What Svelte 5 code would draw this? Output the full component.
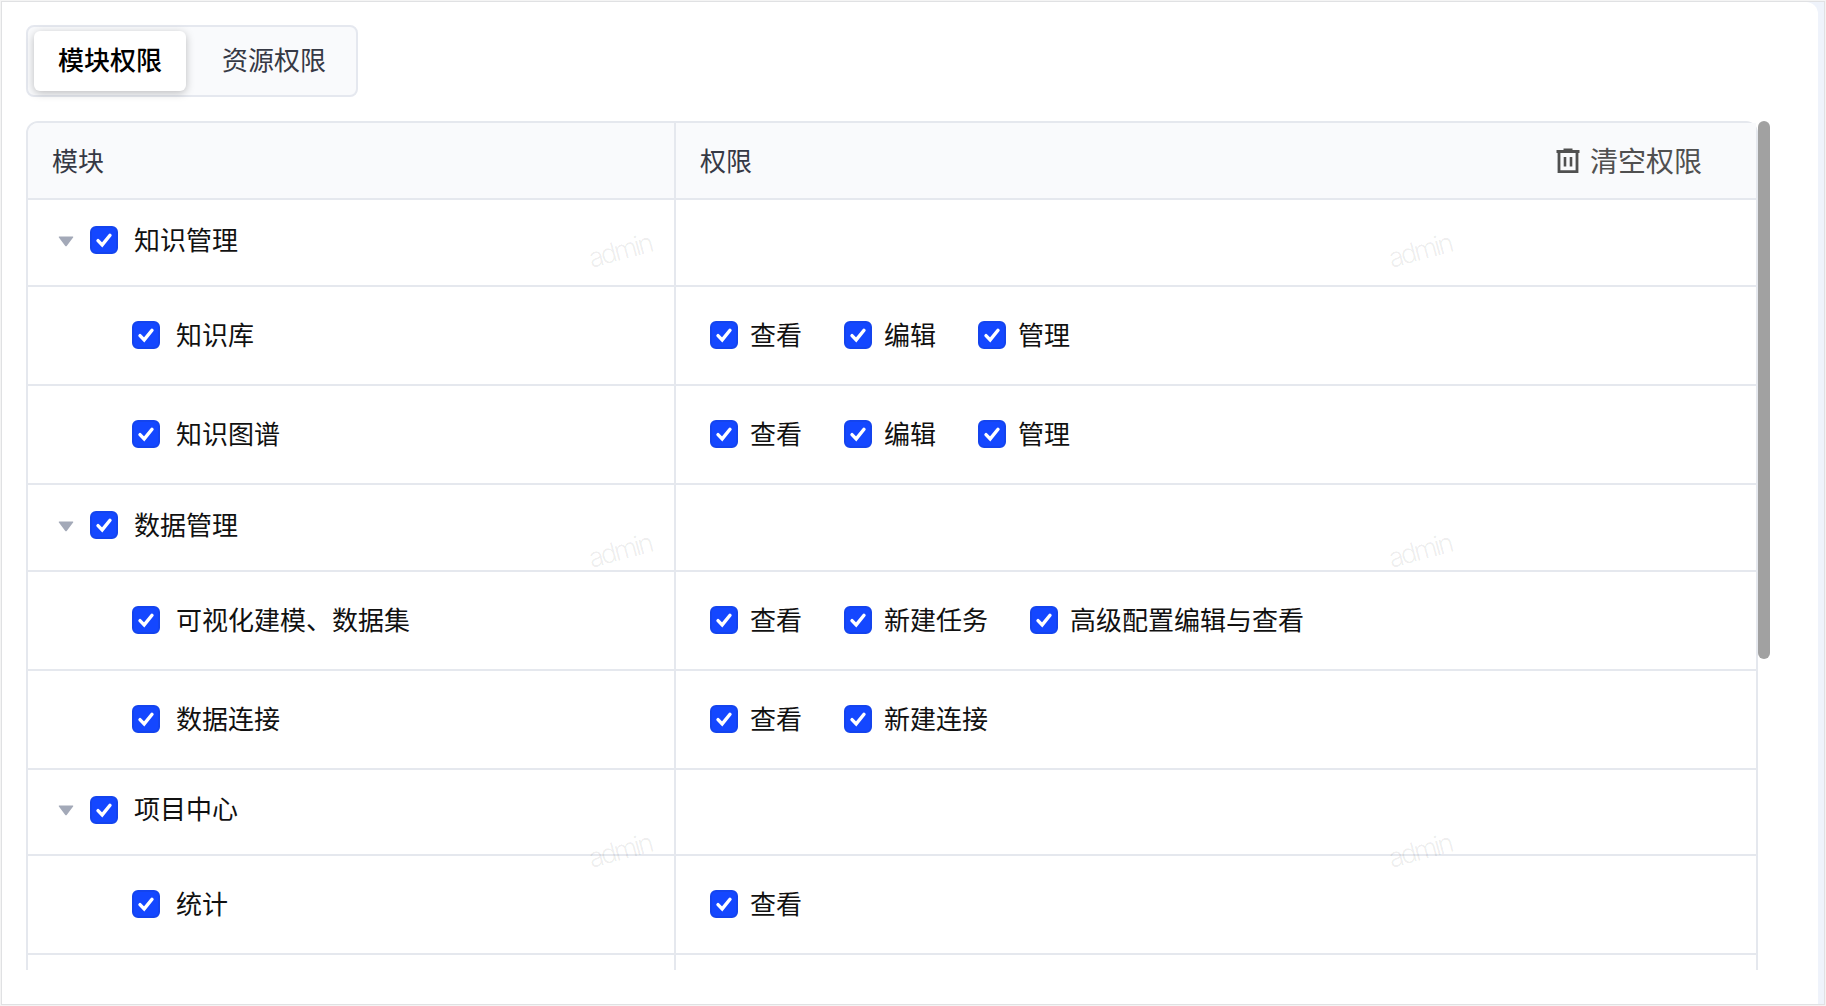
<script lang="ts">
  interface Row {
    label: string;
    kind: 'group' | 'leaf';
    height: number;
    perms?: string[];
  }

  const TABS = [
    { id: 'module', label: '模块权限' },
    { id: 'resource', label: '资源权限' },
  ];

  const ROWS: Row[] = [
    { label: '知识管理', kind: 'group', height: 87 },
    { label: '知识库', kind: 'leaf', height: 99, perms: ['查看', '编辑', '管理'] },
    { label: '知识图谱', kind: 'leaf', height: 99, perms: ['查看', '编辑', '管理'] },
    { label: '数据管理', kind: 'group', height: 87 },
    { label: '可视化建模、数据集', kind: 'leaf', height: 99, perms: ['查看', '新建任务', '高级配置编辑与查看'] },
    { label: '数据连接', kind: 'leaf', height: 99, perms: ['查看', '新建连接'] },
    { label: '项目中心', kind: 'group', height: 86 },
    { label: '统计', kind: 'leaf', height: 99, perms: ['查看'] },
  ];

  const MARKS = [0, 1, 2, 3, 4, 5];

  let active = $state('module');
</script>

{#snippet checkbox()}
  <svg class="checkbox" viewBox="0 0 28 28">
    <rect x="1" y="1" width="26" height="26" rx="5" fill="#1447ff" stroke="#1444ee" stroke-width="2" />
    <path d="M8 14.6 L12.2 18.9 L20 9.2" fill="none" stroke="#fff" stroke-width="3.4" stroke-linecap="round" stroke-linejoin="miter" />
  </svg>
{/snippet}

<div class="page">
  <div class="panel">
    <div class="tabs">
      {#each TABS as tab}
        <button class="tab" class:active={active === tab.id} onclick={() => (active = tab.id)}>
          {tab.label}
        </button>
      {/each}
    </div>

    <div class="scroller">
      <div class="table">
        <div class="row head">
          <div class="cell module">模块</div>
          <div class="cell perms">
            <span>权限</span>
            <button class="clear">
              <svg class="trash" viewBox="0 0 24 26">
                <path d="M7.5 0.5h9v2h-9z" fill="#505050" />
                <path d="M0.5 3.5h23" stroke="#505050" stroke-width="3" />
                <path d="M3 4v19.7h18V4" fill="none" stroke="#505050" stroke-width="2.8" />
                <path d="M9 9v9.5M15 9v9.5" stroke="#505050" stroke-width="2.6" />
              </svg>
              清空权限
            </button>
          </div>
        </div>
        {#each ROWS as row}
          <div class="row {row.kind}" style="height: {row.height}px">
            <div class="cell module">
              {#if row.kind === 'group'}
                <svg class="caret" viewBox="0 0 16 11">
                  <path d="M1.4 0.4h13.2c.7 0 .9.7.5 1.2L8.9 9.8c-.5.7-1.3.7-1.8 0L.9 1.6C.5 1.1.7.4 1.4.4z" fill="#a3a9b8" />
                </svg>
              {/if}
              {@render checkbox()}
              <span>{row.label}</span>
            </div>
            <div class="cell perms">
              {#each row.perms ?? [] as perm}
                <label class="perm">{@render checkbox()}<span>{perm}</span></label>
              {/each}
            </div>
          </div>
        {/each}
        <div class="row rest">
          <div class="cell module"></div>
          <div class="cell perms"></div>
        </div>
      </div>
      <div class="thumb"></div>
    </div>
  </div>

  <div class="watermark">
    {#each MARKS as mark (mark)}
      <span>admin</span>
    {/each}
  </div>
</div>

<style>
  :global(body) { background: #fafafa; }
  .page {
    position: relative; box-sizing: border-box;
    width: 1826px; height: 1006px; padding: 2px;
    background: #eff3fb;
    box-shadow: inset 0 0 0 1px #f4f4f4, inset 0 0 0 2px #e0e1e3;
    font-family: Inter, "Noto Sans CJK SC", sans-serif;
    font-size: 26px; color: #111;
    overflow: hidden;
  }
  .panel {
    box-sizing: border-box; width: 1816px; height: 1002px;
    padding: 23px 0 0 24px;
    background: #fff; border-top-right-radius: 12px;
  }
  button { font: inherit; border: none; background: none; cursor: pointer; margin: 0; }

  .tabs {
    display: flex; gap: 12px; box-sizing: border-box;
    width: 332px; height: 72px; padding: 4px 6px;
    background: #f9fafc; border: 2px solid #e5e8ef; border-radius: 8px;
  }
  .tab {
    box-sizing: border-box; height: 60px; padding: 0 24px; border-radius: 6px;
    line-height: 60px; color: #363945; white-space: nowrap;
  }
  .tab.active {
    background: #fff; color: #000; font-weight: 500;
    box-shadow: 0 2px 8px rgba(0, 0, 0, .25);
  }

  .scroller { display: flex; height: 849px; margin-top: 24px; overflow: hidden; }
  .table {
    box-sizing: border-box; width: 1732px; height: 900px; flex-shrink: 0;
    border: 2px solid #e5e8ee; border-radius: 12px;
  }
  .thumb { width: 12px; height: 538px; border-radius: 6px; background: #a1a1a1; }

  .row { display: flex; box-sizing: border-box; border-bottom: 2px solid #e5e8ee; }
  .head { height: 77px; background: #f9fafc; color: #363945; border-top-left-radius: 10px; }
  .rest { border-bottom: none; height: 60px; }
  .cell { display: flex; align-items: center; box-sizing: border-box; white-space: nowrap; }
  .module { width: 648px; border-right: 2px solid #e5e8ee; }
  .perms { flex: 1; padding-left: 34px; gap: 42px; }
  .head .cell { padding-bottom: 2px; }
  .head .module { padding-left: 24px; }
  .head .perms { padding-left: 24px; padding-right: 54px; justify-content: space-between; }
  .group .module { padding: 0 0 5px 30px; }
  .leaf .cell { padding-bottom: 1px; }
  .leaf .module { padding-left: 104px; }
  .module span { margin-left: 16px; }
  .group span { padding-bottom: 4px; }
  .leaf span { padding-bottom: 3px; }
  .perm { display: flex; align-items: center; gap: 12px; }

  .checkbox { width: 28px; height: 28px; flex-shrink: 0; }
  .caret { width: 16px; height: 11px; margin-right: 16px; margin-top: 2px; }
  .clear { display: flex; align-items: center; gap: 10px; padding: 0; font-size: 28px; color: #505050; }
  .trash { width: 24px; height: 26px; margin-top: 2px; }

  .watermark {
    position: absolute; left: 220px; top: 100px;
    display: grid; grid-template-columns: 800px 800px; grid-auto-rows: 300px;
    pointer-events: none;
  }
  .watermark span {
    place-self: center; transform: rotate(-15deg);
    font-family: Inter, sans-serif; font-size: 27px; font-weight: 300;
    line-height: 1; letter-spacing: -2.6px; color: rgba(0, 0, 0, .08);
  }
</style>
